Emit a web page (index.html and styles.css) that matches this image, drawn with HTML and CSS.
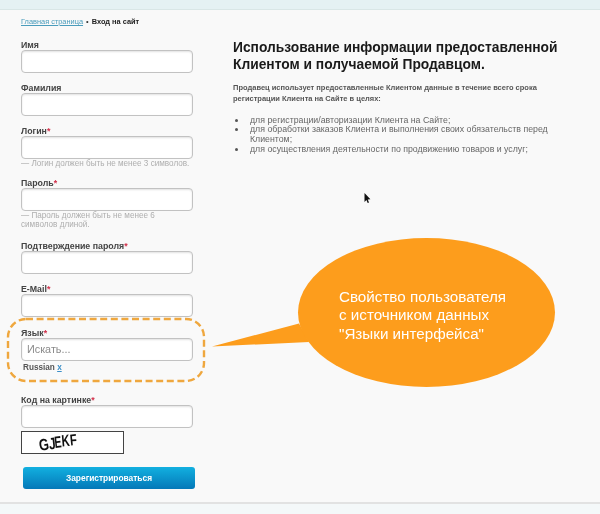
FILE: index.html
```html
<!DOCTYPE html>
<html lang="ru">
<head>
<meta charset="utf-8">
<title>Вход на сайт</title>
<link rel="stylesheet" href="styles.css">
</head>
<body>
<div class="page">
  <div class="topbar"></div>
  <main class="content">
    <section class="form-col">
      <nav class="crumbs"><a href="#">Главная страница</a> <span class="sep">•</span> <b>Вход на сайт</b></nav>
      <form class="form">
        <div class="field"><label>Имя</label><div class="input"></div></div>
        <div class="field"><label>Фамилия</label><div class="input"></div></div>
        <div class="field"><label>Логин<i>*</i></label><div class="input"></div><p class="hint">— Логин должен быть не менее 3 символов.</p></div>
        <div class="field"><label>Пароль<i>*</i></label><div class="input"></div><p class="hint hint-long">— Пароль должен быть не менее 6 символов длиной.</p></div>
        <div class="field"><label>Подтверждение пароля<i>*</i></label><div class="input"></div></div>
        <div class="field"><label>E-Mail<i>*</i></label><div class="input"></div></div>
        <div class="field field-lang"><label>Язык<i>*</i></label><div class="input search">Искать...</div><p class="chosen">Russian <a href="#">x</a></p></div>
        <div class="field field-code"><label>Код на картинке<i>*</i></label><div class="input"></div>
          <div class="captcha"><svg width="101" height="21" viewBox="0 0 101 21"><text transform="translate(18 19) rotate(-10) scale(.85 1.1)">G</text><text transform="translate(27.5 17.5) rotate(-6) scale(.8 1.1)">J</text><text transform="translate(33 16) rotate(-6) scale(.7 1.1)">E</text><text transform="translate(40 14.5) rotate(-5) scale(.75 1.1)">K</text><text transform="translate(48.5 13.5) rotate(-6) scale(.75 1.05)">F</text></svg></div>
        </div>
        <button class="submit" type="button">Зарегистрироваться</button>
      </form>
    </section>
    <section class="info">
      <h1>Использование информации предоставленной Клиентом и получаемой Продавцом.</h1>
      <p class="lead">Продавец использует предоставленные Клиентом данные в течение всего срока регистрации Клиента на Сайте в целях:</p>
      <ul>
        <li>для регистрации/авторизации Клиента на Сайте;</li>
        <li>для обработки заказов Клиента и выполнения своих обязательств перед Клиентом;</li>
        <li>для осуществления деятельности по продвижению товаров и услуг;</li>
      </ul>
    </section>
  </main>
  <footer class="footer"></footer>
  <svg class="overlay" width="600" height="514" viewBox="0 0 600 514" aria-hidden="true">
    <rect class="dash" x="8" y="319" width="196" height="62" rx="18" ry="18"/>
    <path class="bubble" d="M212 346.5 L299 323.5 L309 342 Z"/>
    <ellipse class="bubble" cx="426.5" cy="312.5" rx="128.5" ry="74.5"/>
    <path class="cursor" d="M364.5 193 V202 L366.4 200 L367.7 203 L369 202.4 L367.8 199.6 L370.4 199.3 Z"/>
  </svg>
  <div class="callout-text">Свойство пользователя<br>с источником данных<br>"Языки интерфейса"</div>
</div>
</body>
</html>
```
FILE: styles.css
```css
* { box-sizing: border-box; }
html, body { margin: 0; padding: 0; }
body {
  width: 600px;
  height: 514px;
  overflow: hidden;
  background: #f9f9f9;
  font-family: "Liberation Sans", Arial, sans-serif;
}
.page {
  position: relative;
  width: 600px;
  height: 514px;
  display: flex;
  flex-direction: column;
  background: #f9f9f9;
  overflow: hidden;
  filter: blur(0.35px);
}
.topbar {
  height: 10px;
  flex: none;
  background: #e5f1f3;
  border-bottom: 1px solid #d9e6e6;
}
.content {
  flex: 1;
  display: flex;
  min-height: 0;
}
.form-col {
  width: 172px;
  margin-left: 21px;
  flex: none;
}
.crumbs {
  margin-top: 7px;
  height: 10px;
  line-height: 10px;
  font-size: 7.4px;
  white-space: nowrap;
  color: #222;
}
.crumbs a { color: #4a9cbc; text-decoration: underline; }
.crumbs .sep { color: #333; margin: 0 1px; }
.crumbs b { color: #222; }
.form { margin-top: 12px; }
.field { margin-bottom: 9px; }
label {
  display: block;
  height: 11px;
  line-height: 13px;
  font-size: 8.8px;
  font-weight: bold;
  color: #444;
  white-space: nowrap;
}
label i { color: #d2304a; font-style: normal; }
.input {
  height: 23px;
  background: #fff;
  border: 1px solid #c2c2c2;
  border-radius: 4px;
  box-shadow: inset 0 1px 2px rgba(0,0,0,.12);
}
.search {
  padding-left: 5px;
  font-size: 10.8px;
  line-height: 21px;
  color: #8a8a8a;
}
.hint {
  margin: 0;
  font-size: 8.15px;
  line-height: 9px;
  color: #aeaeae;
}
.hint-long { padding-bottom: 1.5px; }
.chosen {
  margin: 2px 0 0 2px;
  font-size: 8.2px;
  line-height: 10px;
  font-weight: bold;
  color: #555;
}
.chosen a { color: #3b8fc8; }
.field-lang { margin-top: 10px; margin-bottom: 21px; }
.field-code { margin-bottom: 13px; }
.captcha {
  width: 103px;
  height: 23px;
  margin-top: 3px;
  background: #fff;
  border: 1px solid #444;
}
.captcha text {
  font-family: "Liberation Sans", Arial, sans-serif;
  font-size: 15px;
  font-weight: bold;
  fill: #111;
}
.captcha svg { display: block; }
.submit {
  display: block;
  width: 172px;
  height: 22px;
  margin-left: 2px;
  padding: 0;
  border: 0;
  border-radius: 3px;
  background: linear-gradient(#12b0e0, #0478b8);
  color: #fff;
  font-family: inherit;
  font-size: 8.4px;
  font-weight: bold;
}
.info {
  width: 340px;
  margin-left: 40px;
  flex: none;
  padding-top: 29px;
}
h1 {
  margin: 0;
  font-size: 13.8px;
  line-height: 17px;
  font-weight: bold;
  color: #1a1a1a;
}
.lead {
  margin: 9px 0 0;
  width: 320px;
  font-size: 7.5px;
  line-height: 11.3px;
  font-weight: bold;
  color: #555;
}
ul {
  margin: 11px 0 0;
  width: 320px;
  padding: 0 0 0 17px;
  list-style: none;
  font-size: 8.77px;
  line-height: 9.7px;
  color: #666;
}
li { position: relative; }
li::before {
  content: "";
  position: absolute;
  left: -15px;
  top: 3px;
  width: 3px;
  height: 3px;
  border-radius: 50%;
  background: #555;
}
.footer {
  height: 12px;
  flex: none;
  background: #f4f8f9;
  border-top: 2px solid #e2e2e2;
}
.overlay {
  position: absolute;
  left: 0;
  top: 0;
  pointer-events: none;
}
.dash {
  fill: none;
  stroke: #efa73e;
  stroke-width: 2.4;
  stroke-dasharray: 7 3.6;
}
.bubble { fill: #fd9d1c; }
.cursor { fill: #111; }
.callout-text {
  position: absolute;
  left: 339px;
  top: 288px;
  color: #fff;
  font-size: 15.2px;
  line-height: 18.4px;
  white-space: nowrap;
}
```
